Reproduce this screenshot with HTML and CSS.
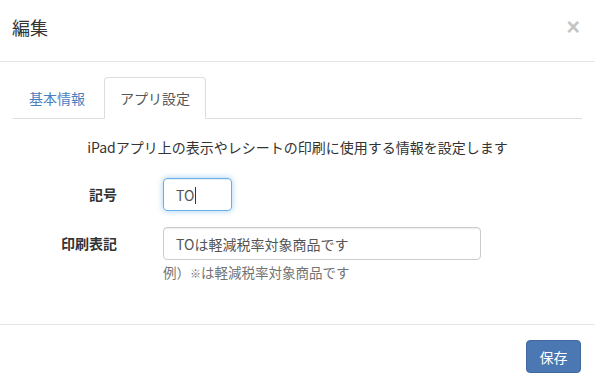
FILE: index.html
```html
<!DOCTYPE html>
<html lang="ja">
<head>
  <meta charset="UTF-8"/>
  <title>編集</title>
  <link rel="stylesheet" href="styles.css">
</head>
<body>
<div class="modal">
  <div class="modal-header">
    <h4 class="modal-title">編集</h4>
    <button class="close" type="button">&times;</button>
  </div>

  <div class="modal-body">
    <ul class="tabs">
      <li><a href="#">基本情報</a></li>
      <li class="active"><a href="#">アプリ設定</a></li>
    </ul>

    <div class="tab-content">
      <p class="lead-text">iPadアプリ上の表示やレシートの印刷に使用する情報を設定します</p>

      <div class="form-row">
        <label class="form-label">記号</label>
        <div class="form-field">
          <div class="form-control focused short">TO<span class="caret"></span></div>
        </div>
      </div>

      <div class="form-row">
        <label class="form-label">印刷表記</label>
        <div class="form-field">
          <div class="form-control wide">TOは軽減税率対象商品です</div>
          <p class="help-block">例）<span class="mark">※</span>は軽減税率対象商品です</p>
        </div>
      </div>
    </div>
  </div>

  <div class="modal-footer">
    <button class="btn-primary" type="button">保存</button>
  </div>
</div>
</body>
</html>
```

FILE: styles.css
```css
body {
    margin: 0;
    background: #ffffff;
    font-family: "Noto Sans CJK JP", "Noto Sans", sans-serif;
    font-size: 14px;
    line-height: 20px;
    color: #333333;
}

.modal {
    width: 595px;
    height: 386px;
    box-sizing: border-box;
}

.modal-header {
    display: flex;
    justify-content: space-between;
    align-items: flex-start;
    height: 62px;
    box-sizing: border-box;
    padding: 14px 15px 0 12px;
    border-bottom: 1px solid #e5e5e5;
}

.modal-title {
    margin: 0;
    font-size: 18px;
    font-weight: normal;
    line-height: 26px;
    color: #333333;
}

.close {
    border: none;
    background: none;
    padding: 0;
    font-family: "Liberation Sans", sans-serif;
    font-size: 23px;
    font-weight: bold;
    line-height: 26px;
    color: #c4c4c4;
    cursor: pointer;
}

.modal-body {
    height: 263px;
    box-sizing: border-box;
    padding: 15px 13px 0;
    border-bottom: 1px solid #e5e5e5;
}

.tabs {
    display: flex;
    margin: 0;
    padding: 0;
    list-style: none;
    border-bottom: 1px solid #dddddd;
}

.tabs li {
    margin-right: 3px;
    margin-bottom: -1px;
}

.tabs a {
    display: block;
    padding: 10px 15px;
    border: 1px solid transparent;
    border-radius: 4px 4px 0 0;
    color: #4a7fc1;
    text-decoration: none;
}

.tabs .active a {
    color: #555555;
    background: #ffffff;
    border-color: #dddddd #dddddd transparent;
}

.tab-content {
    padding-top: 18px;
}

.lead-text {
    margin: 0 0 21px;
    text-align: center;
}

.form-row {
    display: flex;
    align-items: flex-start;
    margin-bottom: 16px;
}

.form-label {
    width: 104px;
    padding-top: 6px;
    text-align: right;
    font-weight: bold;
}

.form-field {
    margin-left: 46px;
}

.form-control {
    height: 33px;
    box-sizing: border-box;
    padding: 6px 12px;
    border: 1px solid #cccccc;
    border-radius: 4px;
    box-shadow: inset 0 1px 1px rgba(0, 0, 0, 0.075);
    color: #555555;
    font-size: 14px;
    line-height: 20px;
}

.form-control.focused {
    border-color: #66afe9;
    box-shadow: inset 0 1px 1px rgba(0, 0, 0, 0.075), 0 0 6px rgba(102, 175, 233, 0.6);
}

.short {
    width: 69px;
}

.wide {
    width: 318px;
}

.caret {
    display: inline-block;
    width: 1px;
    height: 17px;
    margin-left: 1px;
    vertical-align: -3px;
    background: #333333;
}

.help-block {
    margin: 2px 0 0;
    color: #737373;
    font-size: 13.5px;
}

.help-block .mark {
    font-size: 11px;
}

.modal-footer {
    display: flex;
    justify-content: flex-end;
    padding: 15px 14px 0;
}

.btn-primary {
    width: 55px;
    height: 33px;
    padding: 0;
    border: 1px solid #41699f;
    border-radius: 4px;
    background: #4b78b3;
    color: #ffffff;
    font-family: inherit;
    font-size: 14px;
    cursor: pointer;
}
```
